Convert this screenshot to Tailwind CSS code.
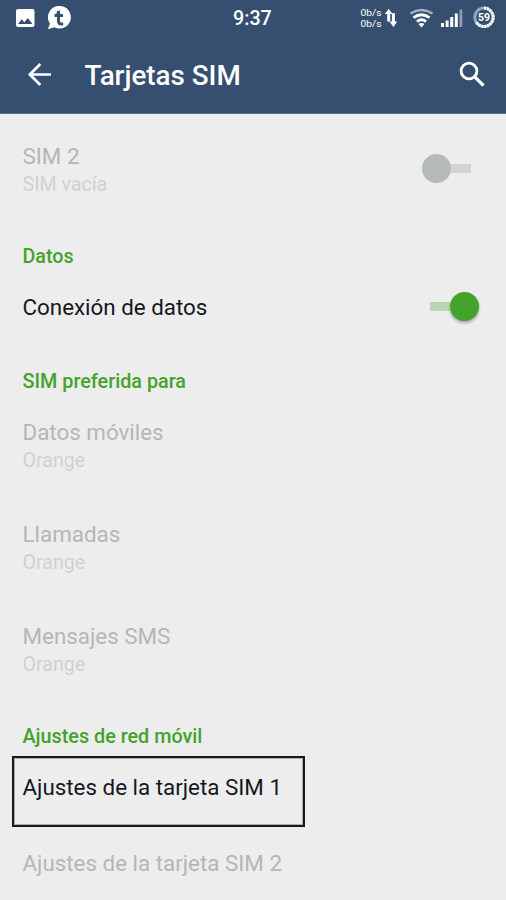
<!DOCTYPE html>
<html lang="es">
<head>
<meta charset="utf-8">
<title>Tarjetas SIM</title>
<script src="https://cdn.jsdelivr.net/npm/@tailwindcss/browser@4"></script>
</head>
<body class="w-[506px] h-[900px] overflow-hidden bg-[#ededed] font-['Roboto',sans-serif] text-[22.36px] leading-7 text-[#15181d]">
<header class="h-[114px] bg-[#364f70] text-white border-b border-[#5c708b]">
  <div class="relative flex h-9 items-center justify-between">
    <svg class="w-[90px] h-9" viewBox="0 0 90 36">
      <path fill="#fff" fill-rule="evenodd" d="M18 9h14.500q2 0 2 2v14q0 2-2 2H18q-2 0-2-2V11q0-2 2-2zM18 24h14.500l-4.700-6-3.500 4.300-2.500-3z"/>
      <path fill="#fff" d="M59.500 6a11.300 11.300 0 1 1-5.200 21.300l-6.500 2 2.200-5.500A11.300 11.300 0 0 1 59.500 6z"/>
      <path fill="none" stroke="#364f70" stroke-width="3" d="M58.500 11v10q0 3 3 3h1.700M54.500 15.500h8.500"/>
      <path fill="#364f70" d="M57 11.500l3-1.300v5H54.500q2.500-1 2.500-3.700z"/>
    </svg>
    <span class="absolute left-[233px] top-[5px] text-[19.7px] leading-7 font-medium">9:37</span>
    <svg class="w-[156px] h-9" viewBox="0 0 156 36" fill="#fff">
      <g font-family="Roboto" font-size="9.300"><text x="10.500" y="16" textLength="21" lengthAdjust="spacingAndGlyphs">0b/s</text><text x="10.500" y="27.200" textLength="21" lengthAdjust="spacingAndGlyphs">0b/s</text></g>
      <path d="M34.800 14l3.900-5 3.900 5h-2.400v7.500h-3V14zM39.500 21.500l3.900 5.500 3.900-5.500h-2.400V13h-3v8.500z"/>
      <path fill="none" stroke="#a8b3c1" stroke-width="2.600" d="M60.500 13.500Q71.500 6.500 82.500 13.500"/>
      <path fill="none" stroke="#fff" stroke-width="2.800" d="M63.500 17.700Q71.500 11.700 79.500 17.700M67 21.600Q71.500 18 76 21.600"/>
      <path d="M68.500 24Q71.500 22 74.500 24L71.500 27.500z"/>
      <path d="M91 23h3v4h-3zM95.600 20.500h3V27h-3zM100.200 17h3v10h-3zM104.800 13.500h3V27h-3z"/>
      <path fill="#8f9daf" d="M109.500 9.500h2.800V27h-2.800z"/>
      <circle cx="134" cy="17.300" r="9.200" fill="none" stroke="#9aa6b6" stroke-width="3"/>
      <path fill="none" stroke="#fff" stroke-width="3" stroke-dasharray="2.300 .6" d="M134 8.100a9.200 9.200 0 1 1-8 13.800"/>
      <text x="134" y="21.200" text-anchor="middle" font-family="Roboto" font-weight="700" font-size="10.500">59</text>
    </svg>
  </div>
  <div class="flex h-[77px] items-center pl-[27px] pr-[20px]">
    <svg class="w-[26px] h-[26px]" viewBox="0 0 26 26" fill="none" stroke="#fff" stroke-width="2.700"><path d="M24 12.500H3M13.300 2L2.800 12.500l10.500 10.500"/></svg>
    <h1 class="ml-[31.5px] mt-[3px] text-[27.8px] leading-9 font-medium">Tarjetas SIM</h1>
    <svg class="ml-auto w-[28px] h-[28px]" viewBox="0 0 28 28" fill="none" stroke="#fff"><circle cx="11" cy="10" r="7.900" stroke-width="2.800"/><path stroke-width="3.300" d="M16.500 15.700l9 9"/></svg>
  </div>
</header>
<main class="pl-[22.5px]">
  <div class="flex justify-between pt-7">
    <div class="text-[#b3b7b8]"><p>SIM 2</p><p class="pt-px text-[19.6px] text-[#cfd1d1]">SIM vacía</p></div>
    <div class="flex items-center mr-[35px] h-[30px] mt-[11.500px]"><span class="size-[29px] rounded-full bg-[#b5b9ba]"></span><span class="w-5 h-[9px] bg-[#d2d4d4]"></span></div>
  </div>
  <h2 class="mt-11 text-[19.7px] font-medium text-[#43a32a]">Datos</h2>
  <div class="mt-[22px] flex h-7 items-center justify-between">
    <p>Conexión de datos</p>
    <div class="-mt-px flex items-center mr-[27px]"><span class="w-5 h-[9px] bg-[#b9d6b1]"></span><span class="size-[29px] rounded-full bg-[#43a32a] shadow-[0_2px_3px_rgba(0,0,0,.3)]"></span></div>
  </div>
  <h2 class="mt-[47px] text-[19.8px] font-medium text-[#43a32a]">SIM preferida para</h2>
  <div class="mt-[22px] flex flex-col gap-[45px] text-[#b3b7b8]">
    <div><p>Datos móviles</p><p class="pt-px text-[19.6px] text-[#cfd1d1]">Orange</p></div>
    <div><p>Llamadas</p><p class="pt-px text-[19.6px] text-[#cfd1d1]">Orange</p></div>
    <div><p>Mensajes SMS</p><p class="pt-px text-[19.6px] text-[#cfd1d1]">Orange</p></div>
  </div>
  <h2 class="mt-[44px] text-[19.8px] font-medium text-[#43a32a]">Ajustes de red móvil</h2>
  <div class="-ml-[11px] mt-[5px] h-[71px] w-[293px] border-[2px] border-[#18191c] pl-[9px] pt-[15px] outline outline-[#18191c]/30 -outline-offset-3"><p>Ajustes de la tarjeta SIM 1</p></div>
  <p class="mt-[22px] text-[#b3b7b8]">Ajustes de la tarjeta SIM 2</p>
</main>
</body>
</html>
